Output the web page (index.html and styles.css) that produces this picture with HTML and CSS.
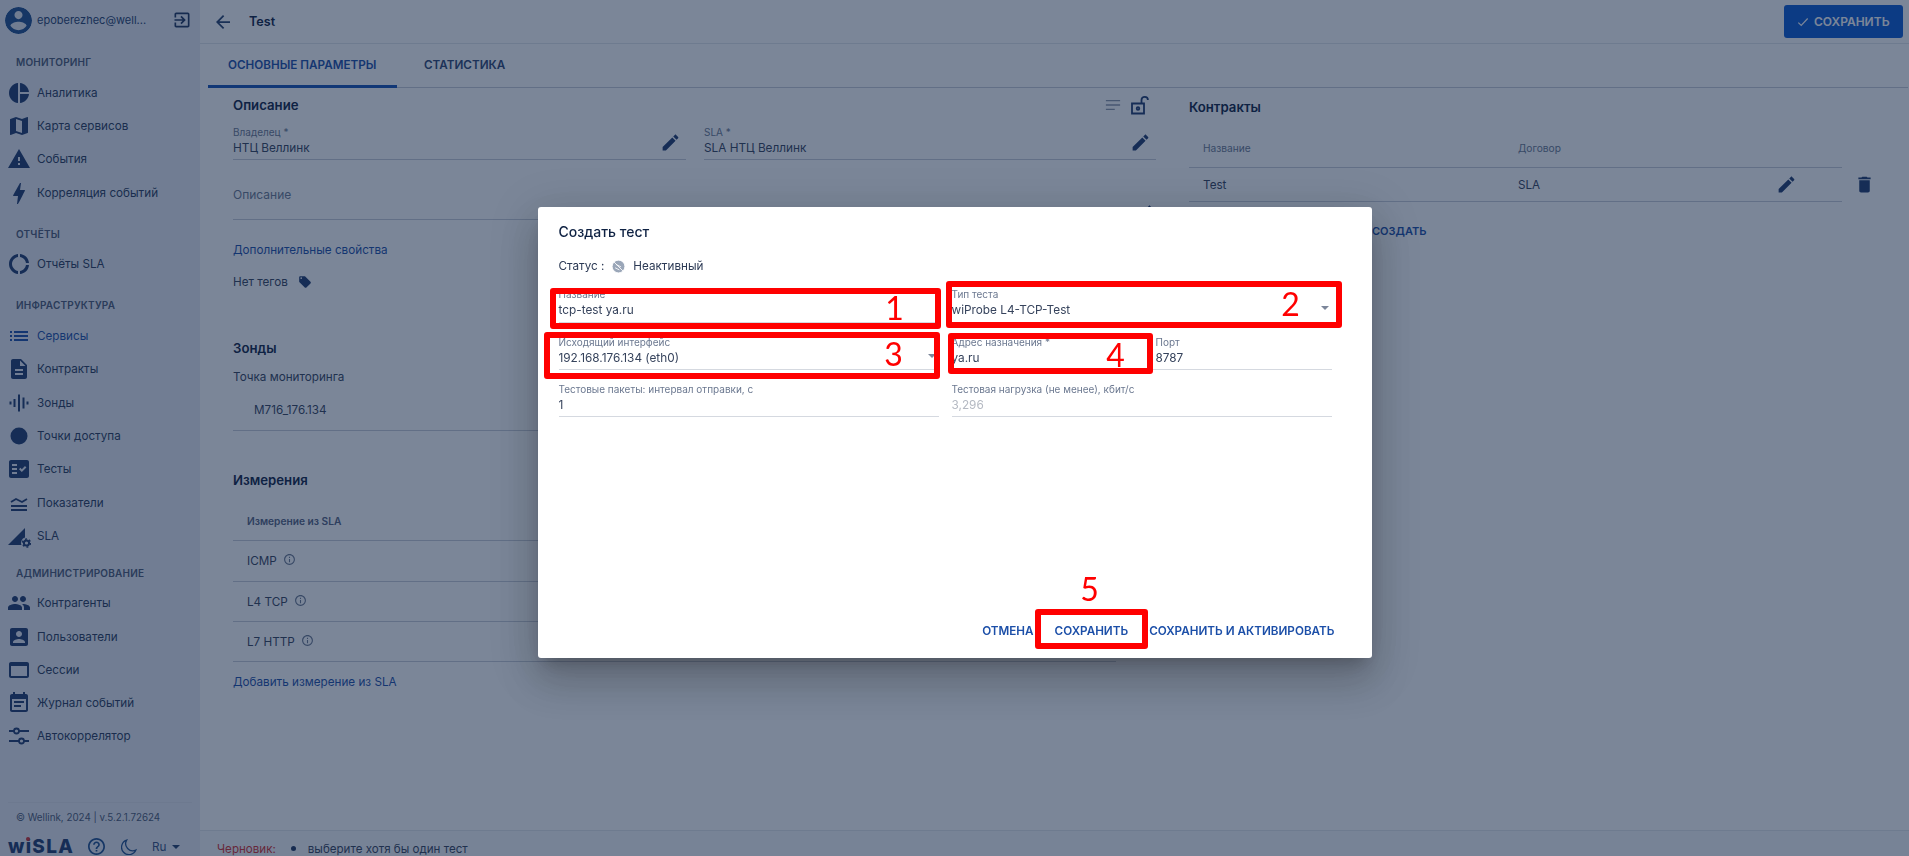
FILE: index.html
```html
<!DOCTYPE html>
<html lang="ru">
<head>
    <meta charset="UTF-8">
    <meta name="viewport" content="width=device-width, initial-scale=1.0">
    <title>wiSLA</title>
    <link rel="stylesheet" href="styles.css">
</head>
<body>
    <div class="app">
        <aside class="sidebar">
            <div class="user">
                <svg class="avatar" viewBox="2 2 20 20"><path d="M12 2C6.48 2 2 6.48 2 12s4.48 10 10 10 10-4.48 10-10S17.52 2 12 2zm0 3c1.66 0 3 1.34 3 3s-1.34 3-3 3-3-1.34-3-3 1.34-3 3-3zm0 14.2c-2.5 0-4.71-1.28-6-3.22.03-1.99 4-3.08 6-3.08 1.99 0 5.97 1.09 6 3.08-1.29 1.94-3.5 3.22-6 3.22z"/></svg>
                <span class="user-name">epoberezhec@well...</span>
                <svg class="icon-logout" viewBox="0 0 24 24"><path d="M10.09 15.59L11.5 17l5-5-5-5-1.41 1.41L12.67 11H3v2h9.67l-2.58 2.59zM19 3H5c-1.11 0-2 .9-2 2v4h2V5h14v14H5v-4H3v4c0 1.1.89 2 2 2h14c1.1 0 2-.9 2-2V5c0-1.1-.9-2-2-2z"/></svg>
            </div>
            <nav class="nav">
                <div class="nav-title">МОНИТОРИНГ</div>
                <a class="nav-item"><svg viewBox="0 0 24 24"><path d="M11 2v20c-5.07-.5-9-4.79-9-10s3.93-9.5 9-10zm2.03 0v8.99H22c-.47-4.74-4.24-8.52-8.97-8.99zm0 11.01V22c4.74-.47 8.5-4.25 8.97-8.99h-8.97z"/></svg>Аналитика</a>
                <a class="nav-item"><svg viewBox="0 0 24 24"><path d="M20.5 3l-.16.03L15 5.1 9 3 3.36 4.9c-.21.07-.36.25-.36.48V20.5c0 .28.22.5.5.5l.16-.03L9 18.9l6 2.1 5.64-1.9c.21-.07.36-.25.36-.48V3.5c0-.28-.22-.5-.5-.5zM15 19l-6-2.11V5l6 2.11V19z"/></svg>Карта сервисов</a>
                <a class="nav-item"><svg viewBox="0 0 24 24"><path d="M1 21h22L12 2 1 21zm12-3h-2v-2h2v2zm0-4h-2v-4h2v4z"/></svg>События</a>
                <a class="nav-item"><svg viewBox="0 0 24 24"><path d="M11 23h-1l1-8H6.5c-.58 0-.57-.32-.38-.66.19-.34.05-.08.07-.12C7.48 11.94 10.42 6.54 13 2h1l-1 7h4.5c.49 0 .56.33.47.51l-.07.15C13.96 17.55 11 23 11 23z"/></svg>Корреляция событий</a>

                <div class="nav-title">ОТЧЁТЫ</div>
                <a class="nav-item"><svg viewBox="0 0 24 24"><path d="M11 5.08V2c-5 .5-9 4.81-9 10s4 9.5 9 10v-3.08c-3-.48-6-3.4-6-6.92s3-6.44 6-6.92zM18.97 11H22c-.47-5-4-8.53-9-9v3.08C16 5.51 18.54 8 18.97 11zM13 18.92V22c5-.47 8.53-4 9-9h-3.03c-.43 3-2.97 5.49-5.97 5.92z"/></svg>Отчёты SLA</a>

                <div class="nav-title">ИНФРАСТРУКТУРА</div>
                <a class="nav-item active"><svg viewBox="0 0 24 24"><path d="M3 13h2v-2H3v2zm0 4h2v-2H3v2zm0-8h2V7H3v2zm4 4h14v-2H7v2zm0 4h14v-2H7v2zM7 7v2h14V7H7z"/></svg>Сервисы</a>
                <a class="nav-item"><svg viewBox="0 0 24 24"><path d="M14 2H6c-1.1 0-1.99.9-1.99 2L4 20c0 1.1.89 2 1.99 2H18c1.1 0 2-.9 2-2V8l-6-6zm2 16H8v-2h8v2zm0-4H8v-2h8v2zm-3-5V3.5L18.5 9H13z"/></svg>Контракты</a>
                <a class="nav-item"><svg class="stroked" viewBox="0 0 24 24"><path d="M3.5 10.5v3M7.5 8v8M12 3.5v17M16.5 6.5v11M20.5 10.5v3"/></svg>Зонды</a>
                <a class="nav-item"><svg viewBox="0 0 24 24"><circle cx="12" cy="12" r="8.5"/></svg>Точки доступа</a>
                <a class="nav-item"><svg viewBox="0 0 24 24"><path d="M20 3H4c-1.1 0-2 .9-2 2v14c0 1.1.9 2 2 2h16c1.1 0 2-.9 2-2V5c0-1.1-.9-2-2-2zM10 17H5v-2h5v2zm0-4H5v-2h5v2zm0-4H5V7h5v2zm4.82 6L12 12.16l1.41-1.41 1.41 1.42L17.99 9l1.42 1.42L14.82 15z"/></svg>Тесты</a>
                <a class="nav-item"><svg class="stroked thin" viewBox="0 0 24 24"><path d="M4 11l5-3 6 3 5-3M4 15h16M4 19h16"/></svg>Показатели</a>
                <a class="nav-item"><svg viewBox="0 0 24 24"><path d="M1 21L18 4v9.500a5.500 5.500 0 0 0-3.500 7.500z"/><circle cx="19.500" cy="19" r="2.600" fill="none" stroke="currentColor" stroke-width="2"/><circle cx="19.500" cy="19" r="4" fill="none" stroke="currentColor" stroke-width="1.400" stroke-dasharray="2 2.200"/></svg>SLA</a>

                <div class="nav-title nav-title-admin">АДМИНИСТРИРОВАНИЕ</div>
                <a class="nav-item"><svg viewBox="0 0 24 24"><path d="M16 11c1.66 0 2.99-1.34 2.99-3S17.66 5 16 5c-1.66 0-3 1.34-3 3s1.34 3 3 3zm-8 0c1.66 0 2.99-1.34 2.99-3S9.66 5 8 5C6.34 5 5 6.34 5 8s1.34 3 3 3zm0 2c-2.33 0-7 1.17-7 3.5V19h14v-2.5c0-2.33-4.67-3.5-7-3.5zm8 0c-.29 0-.62.02-.97.05 1.16.84 1.97 1.97 1.97 3.45V19h6v-2.5c0-2.33-4.67-3.5-7-3.5z"/></svg>Контрагенты</a>
                <a class="nav-item"><svg viewBox="0 0 24 24"><path d="M3 5v14c0 1.1.89 2 2 2h14c1.1 0 2-.9 2-2V5c0-1.1-.9-2-2-2H5c-1.11 0-2 .9-2 2zm12 4c0 1.66-1.34 3-3 3s-3-1.34-3-3 1.34-3 3-3 3 1.34 3 3zm-9 8c0-2 4-3.1 6-3.1s6 1.1 6 3.1v1H6v-1z"/></svg>Пользователи</a>
                <a class="nav-item"><svg viewBox="0 0 24 24"><path d="M20 4H4c-1.1 0-1.99.9-1.99 2L2 18c0 1.1.9 2 2 2h16c1.1 0 2-.9 2-2V6c0-1.1-.9-2-2-2zm0 14H4V8h16v10z"/></svg>Сессии</a>
                <a class="nav-item"><svg viewBox="0 0 24 24"><path d="M17 10H7v2h10v-2zm2-7h-1V1h-2v2H8V1H6v2H5c-1.11 0-1.99.9-1.99 2L3 19c0 1.1.89 2 2 2h14c1.1 0 2-.9 2-2V5c0-1.1-.9-2-2-2zm0 16H5V8h14v11zm-5-5H7v2h7v-2z"/></svg>Журнал событий</a>
                <a class="nav-item"><svg class="stroked thin" viewBox="0 0 24 24"><path d="M2 7h5M12 7h10M2 17h10M17 17h5"/><circle cx="9.500" cy="7" r="2.500"/><circle cx="14.500" cy="17" r="2.500"/></svg>Автокоррелятор</a>
            </nav>
            <div class="sidebar-footer">
                <div class="copyright">© Wellink, 2024 | v.5.2.1.72624</div>
                <div class="footer-row">
                    <span class="logo">wiSLA<i class="logo-dot"></i></span>
                    <svg class="footer-icon" viewBox="2 2 20 20"><path d="M11 18h2v-2h-2v2zm1-16C6.48 2 2 6.48 2 12s4.48 10 10 10 10-4.48 10-10S17.52 2 12 2zm0 18c-4.41 0-8-3.59-8-8s3.59-8 8-8 8 3.59 8 8-3.59 8-8 8zm0-14c-2.21 0-4 1.79-4 4h2c0-1.1.9-2 2-2s2 .9 2 2c0 2-3 1.75-3 5h2c0-2.25 3-2.5 3-5 0-2.21-1.79-4-4-4z"/></svg>
                    <svg class="footer-icon moon" viewBox="0 0 24 24"><path d="M21 17A10 10 0 0 1 8 3a10.500 10.500 0 1 0 13 14z"/></svg>
                    <span class="lang">Ru</span>
                    <span class="caret caret-dark"></span>
                </div>
            </div>
        </aside>

        <main class="main">
            <header class="topbar">
                <svg class="back" viewBox="4 4 16 16"><path d="M20 11H7.830l5.590-5.590L12 4l-8 8 8 8 1.410-1.410L7.830 13H20v-2z"/></svg>
                <span class="page-title">Test</span>
                <button class="save-btn">
                    <svg viewBox="0 0 24 24"><path d="M4 13l5 5L20 6"/></svg>
                    СОХРАНИТЬ
                </button>
            </header>

            <div class="tabs">
                <div class="tab tab-active">ОСНОВНЫЕ ПАРАМЕТРЫ</div>
                <div class="tab">СТАТИСТИКА</div>
            </div>

            <div class="content">
                <section class="col-left">
                    <div class="heading-row">
                        <h2 class="heading">Описание</h2>
                        <div class="heading-tools">
                            <svg class="icon-lines" viewBox="0 0 18 18"><path d="M1 4h16M1 9h16M1 14h10"/></svg>
                            <svg class="icon-lock" viewBox="0 0 20 20"><path d="M2 8.500h12v10H2z"/><circle cx="8" cy="13.500" r="1.300"/><path d="M11.500 8.500V5a3.200 3.200 0 0 1 6.400 0"/></svg>
                        </div>
                    </div>
                    <div class="field-pair">
                        <div class="field">
                            <div class="label">Владелец *</div>
                            <div class="value">НТЦ Веллинк</div>
                            <svg class="pencil" viewBox="0 0 24 24"><path d="M3 17.250V21h3.750L17.810 9.940l-3.750-3.750L3 17.250zM20.710 7.040c.39-.39.39-1.020 0-1.410l-2.340-2.340c-.39-.39-1.020-.39-1.410 0l-1.830 1.830 3.750 3.750 1.830-1.830z"/></svg>
                        </div>
                        <div class="field">
                            <div class="label">SLA *</div>
                            <div class="value">SLA НТЦ Веллинк</div>
                            <svg class="pencil" viewBox="0 0 24 24"><path d="M3 17.250V21h3.750L17.810 9.940l-3.750-3.750L3 17.250zM20.710 7.040c.39-.39.39-1.020 0-1.410l-2.340-2.340c-.39-.39-1.020-.39-1.410 0l-1.830 1.830 3.750 3.750 1.830-1.830z"/></svg>
                        </div>
                    </div>
                    <div class="field field-descr">
                        <div class="placeholder">Описание</div>
                        <svg class="pencil" viewBox="0 0 24 24"><path d="M3 17.250V21h3.750L17.810 9.940l-3.750-3.750L3 17.250zM20.710 7.040c.39-.39.39-1.020 0-1.410l-2.340-2.340c-.39-.39-1.020-.39-1.410 0l-1.830 1.830 3.750 3.750 1.830-1.830z"/></svg>
                    </div>
                    <a class="link link-props">Дополнительные свойства</a>
                    <div class="tags">
                        Нет тегов
                        <svg viewBox="0 0 24 24"><path d="M21.410 11.580l-9-9C12.050 2.220 11.550 2 11 2H4c-1.100 0-2 .9-2 2v7c0 .55.22 1.050.59 1.420l9 9c.36.36.86.58 1.410.58.55 0 1.050-.22 1.410-.59l7-7c.37-.36.59-.86.59-1.410 0-.55-.23-1.060-.59-1.420zM5.500 7C4.670 7 4 6.330 4 5.500S4.670 4 5.500 4 7 4.670 7 5.500 6.330 7 5.500 7z"/></svg>
                    </div>

                    <h2 class="heading heading-probes">Зонды</h2>
                    <div class="sub-label">Точка мониторинга</div>
                    <div class="probe-row">M716_176.134</div>

                    <h2 class="heading heading-measure">Измерения</h2>
                    <div class="measure-table">
                        <div class="measure-head">Измерение из SLA</div>
                        <div class="measure-row measure-row-first">ICMP <svg viewBox="0 0 24 24"><path d="M11 7h2v2h-2zm0 4h2v6h-2zm1-9C6.480 2 2 6.480 2 12s4.480 10 10 10 10-4.480 10-10S17.520 2 12 2zm0 18c-4.410 0-8-3.590-8-8s3.590-8 8-8 8 3.590 8 8-3.590 8-8 8z"/></svg></div>
                        <div class="measure-row">L4 TCP <svg viewBox="0 0 24 24"><path d="M11 7h2v2h-2zm0 4h2v6h-2zm1-9C6.480 2 2 6.480 2 12s4.480 10 10 10 10-4.480 10-10S17.520 2 12 2zm0 18c-4.410 0-8-3.590-8-8s3.590-8 8-8 8 3.590 8 8-3.590 8-8 8z"/></svg></div>
                        <div class="measure-row">L7 HTTP <svg viewBox="0 0 24 24"><path d="M11 7h2v2h-2zm0 4h2v6h-2zm1-9C6.480 2 2 6.480 2 12s4.480 10 10 10 10-4.480 10-10S17.520 2 12 2zm0 18c-4.410 0-8-3.590-8-8s3.590-8 8-8 8 3.590 8 8-3.590 8-8 8z"/></svg></div>
                    </div>
                    <a class="link link-add">Добавить измерение из SLA</a>
                </section>

                <section class="col-right">
                    <h2 class="heading">Контракты</h2>
                    <div class="contract-head">
                        <span class="contract-name">Название</span>
                        <span>Договор</span>
                    </div>
                    <div class="contract-row">
                        <span class="contract-name">Test</span>
                        <span>SLA</span>
                        <svg class="row-pencil" viewBox="0 0 24 24"><path d="M3 17.250V21h3.750L17.810 9.940l-3.750-3.750L3 17.250zM20.710 7.040c.39-.39.39-1.020 0-1.410l-2.340-2.340c-.39-.39-1.020-.39-1.410 0l-1.830 1.830 3.750 3.750 1.830-1.830z"/></svg>
                        <svg class="row-trash" viewBox="0 0 24 24"><path d="M6 19c0 1.100.9 2 2 2h8c1.100 0 2-.9 2-2V7H6v12zM19 4h-3.500l-1-1h-5l-1 1H5v2h14V4z"/></svg>
                    </div>
                    <a class="create-link">СОЗДАТЬ</a>
                </section>
            </div>

            <footer class="draft-bar">
                <span class="draft-title">Черновик:</span>
                <span class="draft-dot"></span>
                <span>выберите хотя бы один тест</span>
            </footer>
        </main>
    </div>

    <div class="backdrop">
        <div class="modal">
            <h3 class="modal-title">Создать тест</h3>
            <div class="modal-status">
                Статус :
                <svg viewBox="0 0 20 20"><circle cx="10" cy="10" r="7.500"/><path d="M3.500 3.500l13 13M7 7.500l6 3M6 11.500l5 2.500"/></svg>
                <span>Неактивный</span>
            </div>
            <div class="modal-form">
                <div class="m-field m-field-top">
                    <div class="label">Название</div>
                    <div class="value">tcp-test ya.ru</div>
                </div>
                <div class="m-field m-field-top">
                    <div class="label">Тип теста</div>
                    <div class="value">wiProbe L4-TCP-Test</div>
                    <span class="caret caret-select"></span>
                </div>
                <div class="m-field">
                    <div class="label">Исходящий интерфейс</div>
                    <div class="value">192.168.176.134 (eth0)</div>
                    <span class="caret caret-select"></span>
                </div>
                <div class="m-field-pair">
                    <div class="m-field">
                        <div class="label">Адрес назначения *</div>
                        <div class="value">ya.ru</div>
                    </div>
                    <div class="m-field">
                        <div class="label">Порт</div>
                        <div class="value">8787</div>
                    </div>
                </div>
                <div class="m-field">
                    <div class="label">Тестовые пакеты: интервал отправки, с</div>
                    <div class="value">1</div>
                </div>
                <div class="m-field">
                    <div class="label">Тестовая нагрузка (не менее), кбит/с</div>
                    <div class="value value-disabled">3,296</div>
                </div>
            </div>
            <div class="modal-actions">
                <a>ОТМЕНА</a>
                <a>СОХРАНИТЬ</a>
                <a>СОХРАНИТЬ И АКТИВИРОВАТЬ</a>
            </div>

            <div class="mark mark-1"></div>
            <div class="mark mark-2"></div>
            <div class="mark mark-3"></div>
            <div class="mark mark-4"></div>
            <div class="mark mark-5"></div>
            <div class="digit digit-1">1</div>
            <div class="digit digit-2">2</div>
            <div class="digit digit-3">3</div>
            <div class="digit digit-4">4</div>
            <div class="digit digit-5">5</div>
        </div>
    </div>
</body>
</html>
```

FILE: styles.css
```css
* {
    box-sizing: border-box;
}
body {
    margin: 0;
    font-family: Inter, "Noto Sans", sans-serif;
    font-size: 11.7px;
    color: #36435c;
    background-color: #fff;
}
svg {
    display: block;
    flex: none;
    fill: currentColor;
}
.app {
    display: flex;
    height: 100vh;
    overflow: hidden;
}

/* sidebar */
.sidebar {
    width: 200px;
    flex: none;
    display: flex;
    flex-direction: column;
    background-color: #e9ecf3;
    color: #1f3660;
}
.user {
    height: 40px;
    display: flex;
    align-items: center;
    padding-left: 5px;
}
.avatar {
    width: 27px;
    height: 27px;
    color: #1f4f8f;
    background-color: #e6e9f0;
    border-radius: 50%;
}
.user-name {
    margin-left: 5px;
    width: 135px;
    font-size: 11px;
    color: #26406d;
}
.icon-logout {
    width: 20px;
    height: 20px;
}
.nav {
    padding-top: 14px;
}
.nav-title {
    height: 16px;
    line-height: 16px;
    margin: 16.5px 0 6px 16px;
    font-size: 10px;
    font-weight: 600;
    letter-spacing: 0.2px;
    color: #4d5a75;
}
.nav-title:first-child {
    margin-top: 0;
}
.nav-title-admin {
    margin-top: 12px;
}
.nav-item {
    height: 33.3px;
    display: flex;
    align-items: center;
    gap: 6px;
    padding-left: 7px;
    color: #2a3b5c;
}
.nav-item svg {
    width: 24px;
    height: 24px;
    color: #1f3a6e;
}
.nav-item.active,
.nav-item.active svg {
    color: #1c4fa8;
}
.stroked {
    fill: none !important;
    stroke: currentColor;
    stroke-width: 2;
}
.stroked.thin {
    stroke-width: 1.8;
}
.sidebar-footer {
    margin-top: auto;
    height: 54px;
    margin-left: 8px;
    margin-right: 8px;
    border-top: 1px solid #e0e3ea;
}
.copyright {
    height: 30px;
    line-height: 30px;
    padding-left: 8px;
    font-size: 9.8px;
    color: #4d5a75;
    white-space: nowrap;
}
.footer-row {
    display: flex;
    align-items: center;
    height: 23px;
    padding-top: 4px;
}
.logo {
    position: relative;
    width: 60px;
    font-size: 19px;
    line-height: 17px;
    font-weight: 800;
    letter-spacing: 1.3px;
    color: #1f3a6e;
}
.logo-dot {
    position: absolute;
    left: 18px;
    top: -1px;
    width: 4px;
    height: 4px;
    border-radius: 50%;
    background-color: #d32f2f;
}
.footer-icon {
    width: 17px;
    height: 17px;
    margin-left: 20px;
    color: #1f4f8f;
}
.moon {
    margin-left: 16px;
    fill: none;
    stroke: currentColor;
    stroke-width: 1.8;
}
.lang {
    margin-left: 14px;
    color: #36507e;
}
.caret {
    display: block;
    width: 0;
    height: 0;
    border-left: 4px solid transparent;
    border-right: 4px solid transparent;
    border-top: 4px solid #26406d;
}
.caret-dark {
    margin-left: 6px;
}

/* main part */
.main {
    flex: 1;
    min-width: 0;
    display: flex;
    flex-direction: column;
}
.topbar {
    height: 44px;
    flex: none;
    display: flex;
    align-items: center;
    padding-left: 16px;
    border-bottom: 1px solid #e3e6ec;
}
.back {
    width: 14px;
    height: 14px;
    color: #26406d;
}
.page-title {
    margin-left: 19px;
    font-size: 12.600px;
    font-weight: 600;
    color: #0f2243;
}
.save-btn {
    margin-left: auto;
    margin-right: 6px;
    width: 119px;
    height: 33px;
    display: flex;
    align-items: center;
    gap: 4px;
    padding: 0 0 0 12px;
    border: none;
    border-radius: 3px;
    background-color: #0b59d3;
    color: #fff;
    font-family: inherit;
    font-size: 12px;
    font-weight: 600;
}
.save-btn svg {
    width: 14px;
    height: 14px;
    fill: none;
    stroke: #fff;
    stroke-width: 2;
}
.tabs {
    height: 44px;
    flex: none;
    display: flex;
    margin-left: 8px;
    margin-right: 1px;
    border-bottom: 1px solid #c8cdd8;
}
.tab {
    height: 43px;
    line-height: 43px;
    padding: 0 27px;
    font-size: 11.7px;
    font-weight: 600;
    color: #2f4672;
}
.tab-active {
    width: 189px;
    padding: 0 0 0 20px;
    margin-bottom: -1px;
    height: 44px;
    line-height: 43px;
    color: #1c4fa8;
    border-bottom: 3px solid #1550b4;
    white-space: nowrap;
}
.content {
    flex: 1;
    display: grid;
    grid-template-columns: 923px 653px;
    column-gap: 33px;
    padding-left: 33px;
}

/* left column */
.col-left {
    padding-top: 8px;
}
.heading {
    margin: 0;
    font-size: 13.2px;
    line-height: 18px;
    font-weight: 600;
    color: #0f2243;
}
.heading-row {
    display: flex;
    justify-content: space-between;
    height: 18px;
}
.heading-tools {
    display: flex;
    align-items: center;
    gap: 9px;
    padding-right: 6px;
}
.icon-lines {
    width: 16px;
    height: 16px;
    fill: none;
    stroke: #8d97a9;
    stroke-width: 1.5;
}
.icon-lock {
    width: 20px;
    height: 20px;
    fill: none;
    stroke: #1f3a6e;
    stroke-width: 1.8;
}
.field-pair {
    display: grid;
    grid-template-columns: 453px 452px;
    column-gap: 18px;
    margin-top: 11px;
}
.field {
    position: relative;
    height: 35px;
    border-bottom: 1px solid #c8cdd8;
}
.label {
    height: 14px;
    line-height: 14px;
    font-size: 10px;
    color: #6b7890;
    white-space: nowrap;
}
.value {
    height: 18px;
    line-height: 18px;
    font-size: 11.8px;
    color: #36435c;
}
.pencil {
    position: absolute;
    right: 5px;
    top: 7px;
    width: 21px;
    height: 21px;
    color: #1f3a6e;
}
.field-descr {
    height: 33px;
    margin-top: 27px;
}
.field-descr .pencil {
    right: 1px;
    top: 16px;
}
.placeholder {
    line-height: 16px;
    font-size: 12px;
    color: #6b7890;
}
.link {
    display: block;
    line-height: 18px;
    color: #1c4fa8;
}
.link-props {
    margin-top: 21px;
}
.tags {
    margin-top: 14px;
    line-height: 18px;
    display: flex;
    align-items: center;
    gap: 10px;
}
.tags svg {
    width: 14px;
    height: 14px;
    color: #1f3a6e;
}
.heading-probes {
    margin-top: 48px;
}
.sub-label {
    margin-top: 11px;
    line-height: 18px;
}
.probe-row {
    height: 45px;
    padding: 15px 0 0 21px;
    line-height: 18px;
    border-bottom: 1px solid #c8cdd8;
}
.heading-measure {
    margin-top: 40px;
}
.measure-table {
    width: 883px;
    margin-top: 14px;
}
.measure-head {
    height: 38px;
    line-height: 37px;
    padding-left: 14px;
    font-size: 10.2px;
    font-weight: 600;
    color: #566380;
    border-bottom: 1px solid #c8cdd8;
}
.measure-row {
    height: 40px;
    display: flex;
    align-items: center;
    gap: 6px;
    padding-left: 14px;
    border-bottom: 1px solid #c8cdd8;
}
.measure-row-first {
    height: 41px;
}
.measure-row svg {
    width: 13px;
    height: 13px;
    margin-top: -3px;
    color: #6b7890;
}
.link-add {
    margin-top: 11px;
}

/* right column */
.col-right {
    padding-top: 10px;
}
.contract-head {
    margin-top: 13px;
    height: 39px;
    display: flex;
    align-items: center;
    font-size: 10.2px;
    color: #6b7890;
    border-bottom: 1px solid #c8cdd8;
}
.contract-name {
    width: 329px;
    padding-left: 14px;
}
.contract-row {
    height: 34px;
    display: flex;
    align-items: center;
    border-bottom: 1px solid #c8cdd8;
}
.row-pencil {
    width: 21px;
    height: 21px;
    margin-left: auto;
    color: #1f3a6e;
}
.row-trash {
    width: 21px;
    height: 21px;
    margin-left: 57px;
    margin-right: -33px;
    color: #1f3a6e;
}
.create-link {
    display: block;
    margin: 20px 0 0 183px;
    line-height: 18px;
    font-size: 11px;
    font-weight: 600;
    color: #1c4fa8;
}
.draft-bar {
    height: 26px;
    flex: none;
    display: flex;
    align-items: center;
    padding: 10px 0 0 17px;
    font-size: 11.6px;
    background-color: #f7f8fb;
    border-top: 1px solid #e3e6ec;
}
.draft-title {
    color: #d32f2f;
}
.draft-dot {
    width: 5px;
    height: 5px;
    margin: 0 12px 0 15px;
    border-radius: 50%;
    background-color: #1f3660;
}

/* dialog */
.backdrop {
    position: fixed;
    top: 0;
    left: 0;
    width: 100%;
    height: 100%;
    display: flex;
    justify-content: center;
    align-items: center;
    padding-top: 9px;
    background-color: rgba(15, 34, 67, 0.55);
}
.modal {
    position: relative;
    width: 834px;
    height: 451px;
    display: flex;
    flex-direction: column;
    padding: 16px 40px 18px 21px;
    background-color: #fff;
    border-radius: 3px;
    box-shadow: 0 11px 15px -7px rgba(0, 0, 0, 0.2), 0 24px 38px 3px rgba(0, 0, 0, 0.14), 0 9px 46px 8px rgba(0, 0, 0, 0.12);
}
.modal-title {
    margin: 0;
    font-size: 14px;
    line-height: 18px;
    font-weight: 500;
    color: #0f2243;
}
.modal-status {
    margin-top: 16px;
    height: 18px;
    display: flex;
    align-items: center;
    font-size: 11.7px;
    color: #2c3a55;
}
.modal-status svg {
    width: 17px;
    height: 17px;
    margin: 0 6px;
    fill: #9aa6b8;
    stroke: #fff;
    stroke-width: 1;
}
.modal-form {
    margin-top: 12px;
    display: grid;
    grid-template-columns: 380px 380px;
    column-gap: 13px;
    row-gap: 12px;
}
.m-field {
    position: relative;
    height: 35px;
    border-bottom: 1px solid #d5d9e0;
}
.m-field-top {
    height: 36px;
}
.m-field-pair {
    display: grid;
    grid-template-columns: 204px 176px;
}
.value-disabled {
    color: #b4b9c2;
}
.caret-select {
    position: absolute;
    right: 3px;
    top: 19px;
    border-top-color: #7c869a;
}
.modal-actions {
    margin-top: auto;
    display: flex;
    justify-content: flex-end;
    gap: 21px;
    margin-right: -3px;
    font-size: 11.7px;
    font-weight: 600;
    line-height: 18px;
    color: #1c4fa8;
}

/* red annotations on top of the dialog */
.mark {
    position: absolute;
    border: 6px solid #f00;
    border-radius: 3px;
}
.mark-1 { left: 12px; top: 81px; width: 391px; height: 41px; }
.mark-2 { left: 408px; top: 74px; width: 396px; height: 47px; }
.mark-3 { left: 6px; top: 125px; width: 396px; height: 47px; }
.mark-4 { left: 410px; top: 126px; width: 205px; height: 41px; }
.mark-5 { left: 497px; top: 402px; width: 113px; height: 40px; }
.digit {
    position: absolute;
    width: 30px;
    height: 30px;
    line-height: 30px;
    text-align: center;
    font-family: Lato, sans-serif;
    font-size: 32px;
    color: #f00;
}
.digit-1 { left: 342px; top: 86px; }
.digit-2 { left: 738px; top: 82px; }
.digit-3 { left: 341px; top: 132px; }
.digit-4 { left: 563px; top: 133px; }
.digit-5 { left: 537px; top: 367px; }
```
